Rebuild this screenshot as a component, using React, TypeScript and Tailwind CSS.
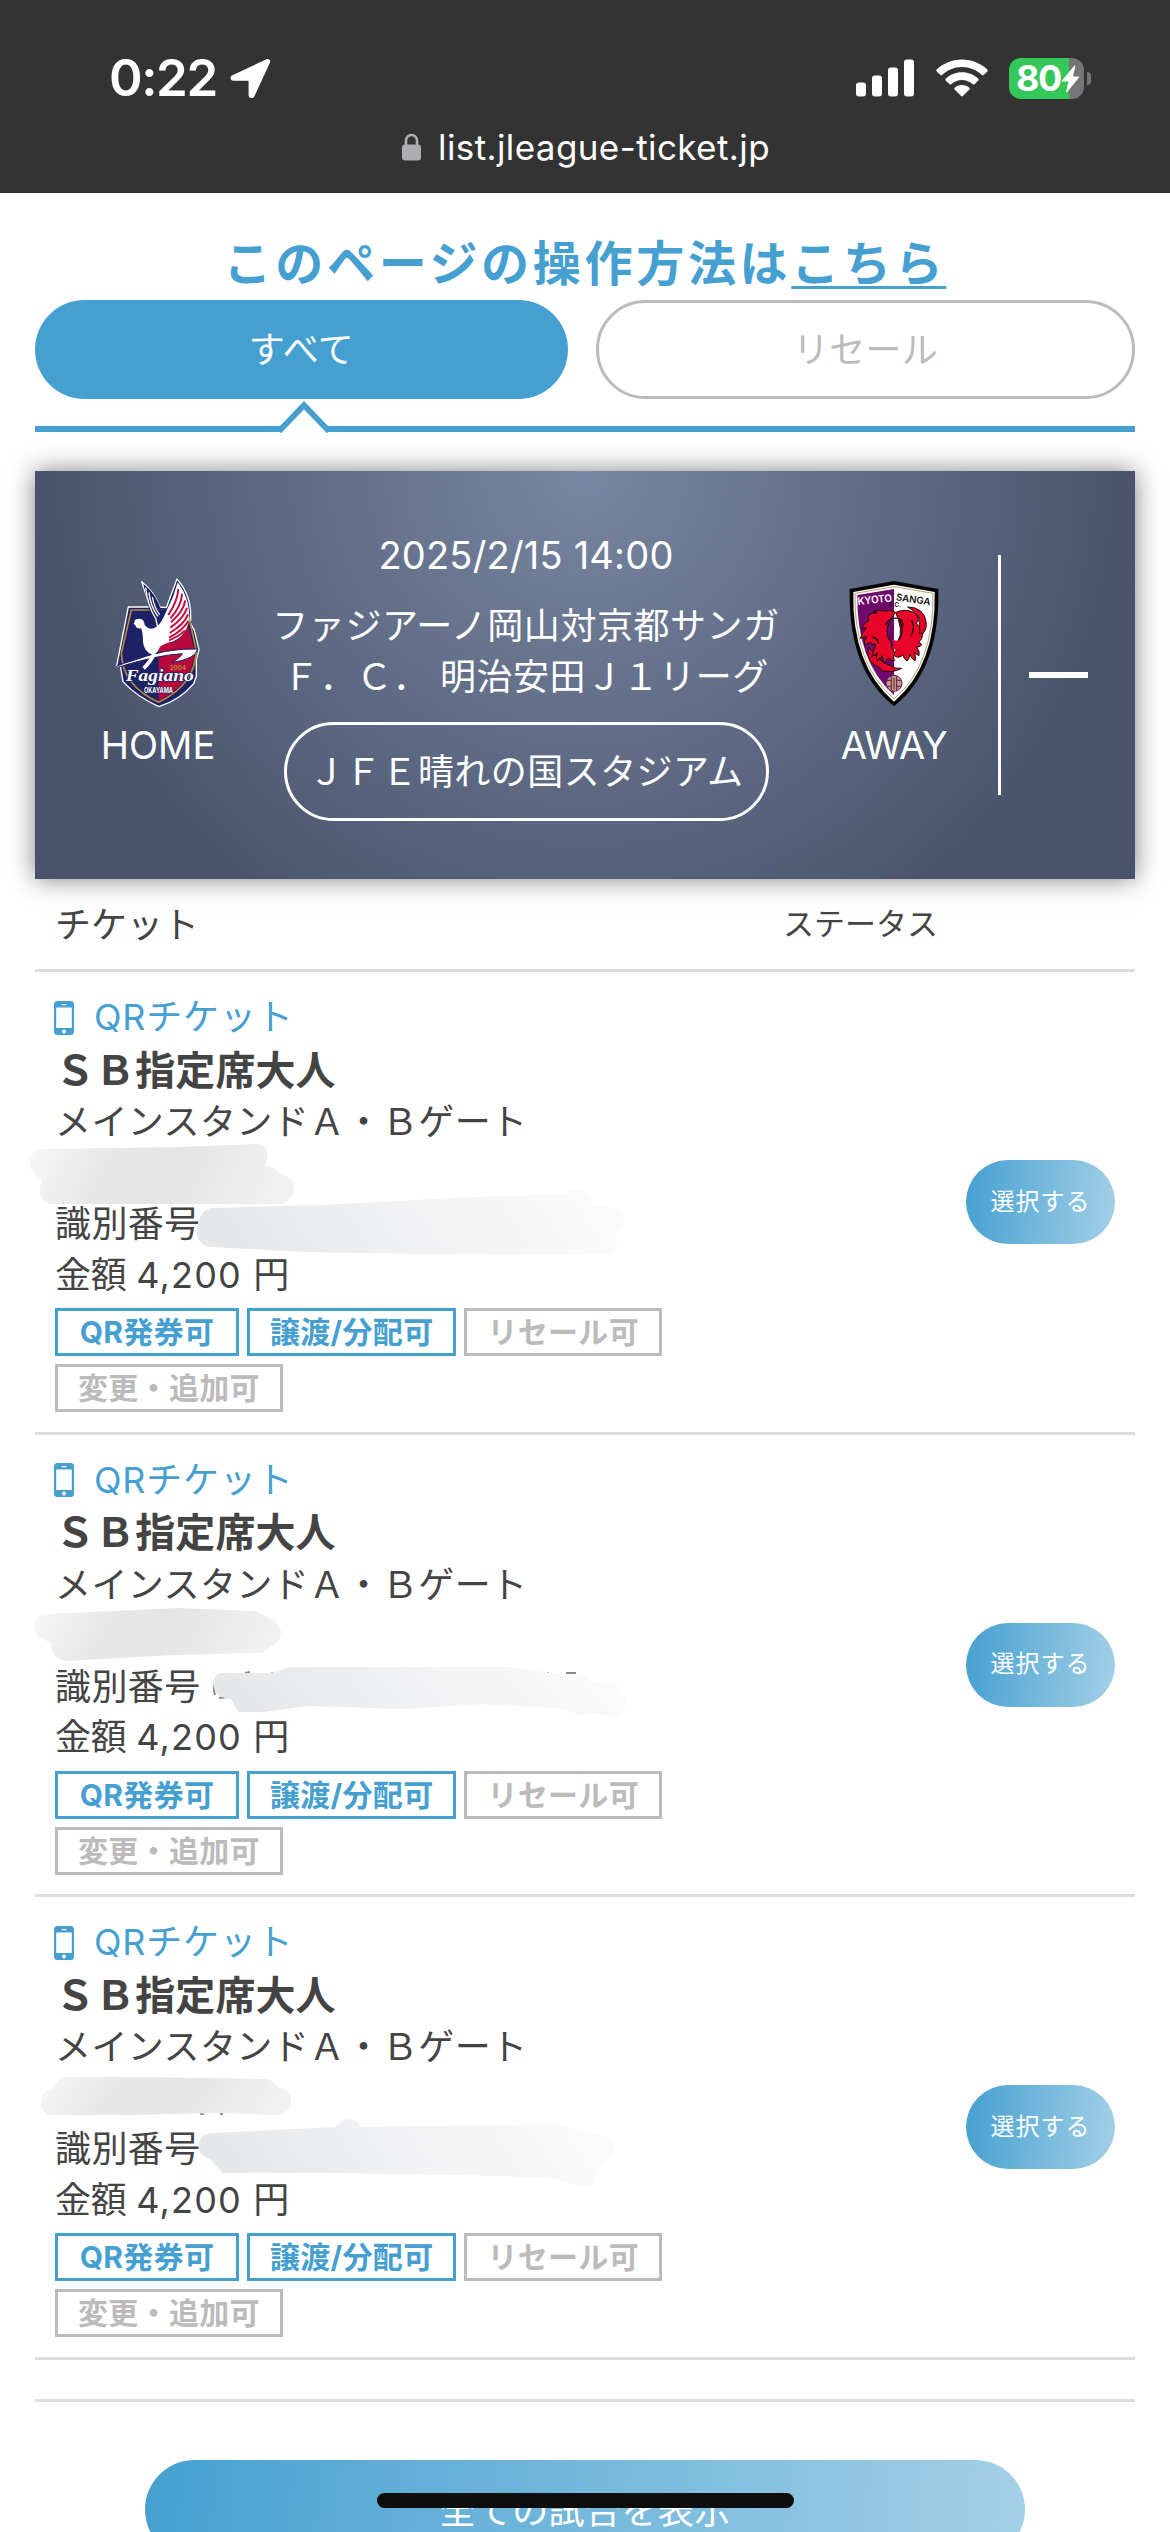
import { clsx } from 'clsx';

interface Label {
  text: string;
  active: boolean;
}

interface Mask {
  name: string;
  number: string;
  marks?: string;
}

interface Ticket {
  id: number;
  kind: string;
  seat: string;
  gate: string;
  price: string;
  labels: Label[];
  mask: Mask;
}

const LABELS: Label[] = [
  { text: 'QR発券可', active: true },
  { text: '譲渡/分配可', active: true },
  { text: 'リセール可', active: false },
  { text: '変更・追加可', active: false },
];

const BASE = {
  kind: 'QRチケット',
  seat: 'ＳＢ指定席大人',
  gate: 'メインスタンドＡ・Ｂゲート',
  price: '4,200',
  labels: LABELS,
};

// Hidden personal details are covered by hand-drawn strokes
const TICKETS: Ticket[] = [
  {
    ...BASE,
    id: 1,
    mask: {
      name: 'M33 190Q34 180 42 180L178 178L257 175Q266 177 264 187L261 196Q276 198 278 205Q291 207 291 217Q290 226 281 229L50 229Q41 225 43 216L45 206Q32 200 33 190Z',
      number: 'M200 258Q201 242 211 239L321 236L473 228L567 225Q578 213 588 228L590 238Q620 235 621 247Q620 255 613 260L614 272Q612 279 603 279L424 279L308 277L210 272Q199 269 200 258Z',
    },
  },
  {
    ...BASE,
    id: 2,
    mask: {
      name: 'M38 192Q38 182 46 182Q110 179 179 176L254 179L272 188Q281 195 276 204L261 215L174 217L67 223Q52 222 54 204Q38 203 38 192Z',
      number: 'M216 248Q217 240 224 241L272 241L290 235L509 235L551 241L580 243L594 250Q621 248 622 264Q624 280 612 279L598 275L580 277L565 271L482 266L402 271L308 268L263 274L240 274L233 261Q217 261 216 248Z',
      marks: 'M215 260Q211 246 220 239M219 263L228 262M245 238L250 237M269 240L273 238M566 238L576 238M547 238L549 238',
    },
  },
  {
    ...BASE,
    id: 3,
    mask: {
      name: 'M44 205Q45 194 56 194Q58 184 67 183L134 183L268 185L277 193Q289 195 288 206Q286 215 273 215L220 213L130 215L50 215Q43 212 44 205Z',
      number: 'M202 250Q201 240 212 239L337 233Q350 217 360 233L554 230L589 239Q613 242 612 249Q609 261 594 269L592 282Q589 288 581 286L554 278L504 276L335 273L224 273L213 260Q202 257 202 250Z',
      marks: 'M200 217L204 217M220 217L223 217M119 217L122 217',
    },
  },
];

function StatusBar() {
  return (
    <header className="h-[193px] bg-[#333333] pt-12 text-white">
      <div className="flex h-[60px] items-center justify-between pr-[79px] pl-[109px]">
        <div className="flex items-center gap-[13px]">
          <span className="text-[51px] leading-[60px] font-semibold tracking-[-1.4px]">0:22</span>
          <svg width="41" height="40" viewBox="0 0 41 40" fill="currentColor">
            <path d="M36.5 1.2 2.4 17.2c-3 1.5-2.2 5.6 1.1 5.6h14.3c.5 0 .8.3.8.8V37c0 3.500 4.400 4.300 5.800 1.200L40 4.500c1-2.300-1.200-4.300-3.500-3.300Z" />
          </svg>
        </div>
        <div className="flex items-center">
          <svg width="58" height="38" viewBox="0 0 58 38" fill="currentColor">
            <rect x="0" y="23.500" width="10" height="14" rx="3" />
            <rect x="16" y="16.500" width="10" height="21" rx="3" />
            <rect x="32" y="8.500" width="10" height="29" rx="3" />
            <rect x="48" y="0.500" width="10" height="37" rx="3" />
          </svg>
          <svg className="ml-[22px]" width="52" height="38" viewBox="0 0 52 38" fill="currentColor">
            <path d="M26 0.500C35.800 0.500 44.800 4.300 51.300 10.600c.5.5.5 1.300 0 1.800l-3.700 3.700c-.5.5-1.200.5-1.700 0C40.700 11 33.700 8 26 8S11.300 11 6.100 16.100c-.5.5-1.200.5-1.700 0L.700 12.400c-.5-.5-.5-1.300 0-1.800C7.200 4.300 16.200.500 26 .500Z" />
            <path d="M26 13.300c6.300 0 12 2.400 16.300 6.400.5.5.5 1.300 0 1.800l-3.800 3.700c-.5.5-1.200.5-1.700 0C34 22.500 30.200 20.900 26 20.900s-8 1.600-10.800 4.300c-.5.5-1.200.5-1.700 0l-3.800-3.700c-.5-.5-.5-1.300 0-1.800 4.300-4 10-6.400 16.300-6.400Z" />
            <path d="M26 26c2.800 0 5.400 1 7.300 2.700.6.5.6 1.300.1 1.800l-6.500 6.500c-.5.5-1.300.5-1.800 0l-6.500-6.500c-.5-.5-.5-1.300.1-1.800C20.600 27 23.200 26 26 26Z" />
          </svg>
          <div className="relative ml-[21px] flex h-[41px] w-[75px] items-center rounded-[12px] bg-[linear-gradient(90deg,#34c759_0_60px,#757577_60px)] pl-[7px]">
            <span className="text-[36px] leading-[41px] font-bold tracking-[-1.500px]">80</span>
            <svg className="absolute top-[7px] left-[52px]" width="19" height="28" viewBox="0 0 19 28" fill="currentColor">
              <path d="M13 1 1 15.500c-.4.6-.2 1 .5 1h6L5 26.500c-.2 1 .7 1.200 1.300.5L18 12.500c.5-.6.2-1.100-.5-1.100h-5.500L14.300 1.500C14.500.500 13.600.200 13 1Z" />
            </svg>
          </div>
          <div className="ml-[3px] h-[13px] w-1 rounded-r-full bg-[#757577]" />
        </div>
      </div>
      <div className="mt-4 flex h-[46px] items-center justify-center gap-[17px] pl-0.5">
        <svg width="19" height="28" viewBox="0 0 19 28">
          <path d="M4 13V7.500a5.500 5.500 0 0 1 11 0V13" fill="none" stroke="#aeaeb2" strokeWidth="2.600" />
          <rect x="0" y="11.500" width="19" height="16" rx="3" fill="#aeaeb2" />
        </svg>
        <span className="text-[35px] leading-[46px] tracking-[0.4px]">list.jleague-ticket.jp</span>
      </div>
    </header>
  );
}

function Tabs() {
  return (
    <nav>
      <div className="flex gap-7 text-4xl">
        <button className="h-[99px] flex-1 rounded-full bg-[#45a0d1] pt-px tracking-[0.5px] text-white">すべて</button>
        <button className="h-[99px] flex-1 rounded-full border-3 border-[#bbbbbb] tracking-[0.3px] text-[#bbbbbb]">リセール</button>
      </div>
      <div className="relative mt-[27px] h-1.5 bg-[#45a0d1]">
        <svg className="absolute -top-[26px] left-[241px]" width="56" height="33" viewBox="0 0 56 33">
          <path d="M3 32 28 5l25 27Z" fill="#ffffff" />
          <path d="M3 31.200 28 5.200l25 26" fill="none" stroke="#45a0d1" strokeWidth="5.800" />
        </svg>
      </div>
    </nav>
  );
}

function HomeCrest() {
  return (
    <svg width="86" height="130" viewBox="74 55 258 390">
      <path
        d="M114 142H180L154 66Q194 98 208 142L228 144L260 58Q308 112 300 190L312 212L326 270L318 300V350L310 372Q270 420 206 441Q140 412 98 366L94 342L90 318L78 324Z"
        fill="#1d2266"
        stroke="#ffffff"
        strokeWidth="4"
        strokeLinejoin="round"
      />
      <path d="M123 151H291L318 272Q315 375 205 428Q96 378 93 280Z" fill="#1d2266" stroke="#b58a3c" strokeWidth="5" />
      <path d="M205 190 292 192 313 272Q310 371 205 423Z" fill="#b8083c" />
      <path d="M160 74Q195 100 212 150L238 146L260 64Q303 112 295 190Q285 232 245 250L190 215Z" fill="#1d2266" />
      <path
        d="M166 84Q172 140 196 176L203 206M176 98Q180 140 203 170M186 112Q192 145 208 165"
        fill="none"
        stroke="#ffffff"
        strokeWidth="4"
      />
      <path
        d="M133 186Q131 178 144 178Q160 174 163 196Q174 210 190 206Q208 200 220 172L248 112L262 68Q300 118 296 180Q290 226 246 246Q226 248 208 262Q205 278 188 286Q160 276 158 246Q158 218 152 206Q138 208 136 198L130 192Z"
        fill="#ffffff"
      />
      <path
        d="M264 88Q262 124 234 166M275 102Q274 138 240 176M285 122Q280 154 242 188M290 144Q282 174 240 204M293 164Q282 194 238 220M294 184Q278 212 236 234M284 212Q266 230 236 242"
        fill="none"
        stroke="#c40d3f"
        strokeWidth="6"
      />
      <path
        d="M78 320Q100 310 124 304Q230 264 322 268Q316 298 246 308Q274 290 276 282Q200 286 78 324Z"
        fill="#ffffff"
        stroke="#1d2266"
        strokeWidth="3"
      />
      <path d="M192 280Q184 302 160 326" fill="none" stroke="#ffffff" strokeWidth="11" />
      <text x="239" y="332" fill="#b58a3c" fontSize="19" fontWeight="700" textLength="48" lengthAdjust="spacingAndGlyphs">
        2004
      </text>
      <text
        x="106"
        y="364"
        fill="#ffffff"
        stroke="#1d2266"
        strokeWidth="5"
        paintOrder="stroke"
        fontFamily="Liberation Serif, serif"
        fontSize="50"
        fontStyle="italic"
        fontWeight="700"
        textLength="204"
        lengthAdjust="spacingAndGlyphs"
      >
        Fagiano
      </text>
      <text
        x="161"
        y="401"
        fill="#ffffff"
        stroke="#1d2266"
        strokeWidth="3"
        paintOrder="stroke"
        fontSize="22"
        fontWeight="700"
        textLength="87"
        lengthAdjust="spacingAndGlyphs"
      >
        OKAYAMA
      </text>
    </svg>
  );
}

function AwayCrest() {
  return (
    <svg width="90" height="130" viewBox="60 55 270 390">
      <path d="M195 64 328 88Q334 330 195 440Q56 330 62 88Z" fill="#050505" />
      <path d="M195 75 317 97Q322 318 195 426Q68 318 73 97Z" fill="#ffffff" />
      <path d="M195 81 312 101Q316 314 195 418Q74 314 78 101Z" fill="#ffffff" stroke="#b7a469" strokeWidth="3" />
      <path d="M195 88V406Q82 306 85 106Z" fill="#6f0a6d" />
      <text x="87" y="136" fill="#ffffff" fontSize="31" fontWeight="600" textLength="103" lengthAdjust="spacingAndGlyphs" transform="rotate(-6 87 136)">
        KYOTO
      </text>
      <text x="200" y="122" fill="#111111" fontSize="29" fontWeight="600" textLength="104" lengthAdjust="spacingAndGlyphs" transform="rotate(8 200 122)">
        SANGA
      </text>
      <text x="180" y="141" fill="#111111" fontSize="20" fontWeight="600" textLength="36">
        F.C.
      </text>
      <g fill="#e9052a" stroke="#141008" strokeWidth="3" strokeLinejoin="round">
        {/* Tail feathers */}
        <path d="M236 142Q286 142 292 190Q293 216 272 232L264 214Q276 196 270 176Q264 158 236 142Z" />
        <path d="M120 262Q108 300 140 318Q158 324 158 334L184 336Q204 334 218 326Q196 328 186 318Q150 310 120 262Z" />
        {/* Left wing */}
        <path d="M200 158Q184 148 168 154Q150 148 134 156L144 160Q124 158 116 172L120 182Q104 188 98 206L112 204Q98 220 94 236L114 230Q104 244 106 256L124 248Q130 256 140 254Q132 276 128 292L144 280Q140 294 146 304L160 288Q162 302 166 312L178 294Q182 304 196 304Q190 290 198 280Q184 264 186 248Q172 232 174 212Q176 186 200 158Z" />
        {/* Right wing */}
        <path d="M200 158Q228 146 254 158Q270 168 268 184L262 190Q278 204 270 222L280 220Q282 238 270 246L278 256Q270 264 262 262Q274 274 270 288Q262 286 256 276Q262 292 258 304Q248 298 242 284Q242 298 234 304Q224 298 222 286Q208 298 196 288Q194 274 204 270Q194 262 204 250Q218 228 214 206Q210 180 200 158Z" />
      </g>
      <path
        d="M170 196Q180 172 208 176Q222 180 222 200M212 184Q228 212 210 240M130 232Q148 236 148 252M248 182Q260 206 246 230"
        fill="none"
        stroke="#141008"
        strokeWidth="4"
      />
      <path d="M197 190 210 206 205 226 197 240Z" fill="#ffffff" />
      <path d="M188 240Q200 254 190 268L204 272 208 244Z" fill="#e9052a" />
      <circle cx="195" cy="371" r="24" fill="#b7a469" stroke="#6f0a6d" strokeWidth="3" />
      <path d="M187 350V392M203 350V392M195 354V388M174 362H187M203 362H216M174 380H187M203 380H216" stroke="#6f0a6d" strokeWidth="3" />
    </svg>
  );
}

function MatchCard() {
  return (
    <section className="mt-[39px] flex h-[408px] bg-[radial-gradient(circle_560px_at_50%_0%,#7986a1,#48536b)] text-white shadow-[0_0_24px_rgba(0,0,0,0.5)]">
      <div className="flex w-[246px] flex-col items-center pt-[107px]">
        <HomeCrest />
        <p className="mt-[12px] text-[38px] leading-[50px]">HOME</p>
      </div>
      <div className="flex w-[490px] flex-col items-center pt-[59px]">
        <p className="text-[38px] leading-[50px] tracking-[0.200px]">2025/2/15 14:00</p>
        <h2 className="mt-[21px] text-center text-4xl leading-[51px] tracking-[0.550px] whitespace-nowrap">
          ファジアーノ岡山対京都サンガ
          <br />
          Ｆ．Ｃ． 明治安田Ｊ１リーグ
        </h2>
        <div className="mt-[19px] flex h-[99px] w-[485px] items-center justify-center rounded-full border-3 border-white text-4xl tracking-[0.450px]">
          ＪＦＥ晴れの国スタジアム
        </div>
      </div>
      <div className="flex w-[227px] flex-col items-center pt-[107px] pl-[19px]">
        <AwayCrest />
        <p className="mt-[12px] text-[38px] leading-[50px] tracking-[-0.500px]">AWAY</p>
      </div>
      <div className="h-60 w-[3px] self-center bg-white" />
      <div className="flex flex-1 items-center justify-center pr-[19px]">
        <div className="h-1.5 w-[59px] bg-white" />
      </div>
    </section>
  );
}

function PhoneIcon() {
  return (
    <svg width="20" height="34" viewBox="0 0 20 34">
      <rect width="20" height="34" rx="3.500" fill="#45a0d1" />
      <rect x="2.200" y="6.500" width="15.600" height="20.500" fill="#ffffff" />
      <rect x="7.500" y="3" width="5" height="1.200" rx="0.600" fill="#ffffff" />
      <circle cx="10" cy="30.500" r="1.900" fill="#ffffff" />
    </svg>
  );
}

function TicketMask({ id, mask }: { id: number; mask: Mask }) {
  return (
    <svg className="absolute top-0 -left-[35px]" width="700" height="460" viewBox="0 0 700 460">
      <defs>
        <linearGradient id={`name-${id}`} x1="0" x2="1" y1="0" y2="0.1">
          <stop offset="0" stopColor="#f7f7f7" />
          <stop offset="0.3" stopColor="#e8e8e8" />
          <stop offset="0.6" stopColor="#e5e5e5" />
          <stop offset="1" stopColor="#f1f1f1" />
        </linearGradient>
        <linearGradient id={`number-${id}`} x1="0" x2="1" y1="0.1" y2="0">
          <stop offset="0" stopColor="#e6e7e9" />
          <stop offset="0.4" stopColor="#f0f1f3" />
          <stop offset="0.7" stopColor="#f6f6f6" />
          <stop offset="1" stopColor="#fcfcfc" />
        </linearGradient>
      </defs>
      {mask.marks && <path d={mask.marks} fill="none" stroke="#8a8a8a" strokeWidth="2" />}
      <path d={mask.name} fill={`url(#name-${id})`} stroke={`url(#name-${id})`} strokeWidth="6" strokeLinejoin="round" />
      <path d={mask.number} fill={`url(#number-${id})`} stroke={`url(#number-${id})`} strokeWidth="6" strokeLinejoin="round" />
    </svg>
  );
}

function TicketRow({ ticket }: { ticket: Ticket }) {
  return (
    <li className="relative flex h-[462.67px] items-start justify-between border-b-3 border-[#dddddd] pr-5 pl-5">
      <div className="w-[630px] pt-5 text-4xl leading-[51.5px] tracking-[0.4px]">
        <p className="-ml-px flex items-center gap-5 text-[#45a0d1]">
          <PhoneIcon />
          <span className="tracking-[0.800px]">{ticket.kind}</span>
        </p>
        <p className="h-[51.5px] pt-px text-[40px] font-bold tracking-[0.1px]">{ticket.seat}</p>
        <p className="h-[51.5px] pt-0.5">{ticket.gate}</p>
        <p className="h-[51.5px]" />
        <p className="h-[51.5px] pt-px">識別番号</p>
        <p>
          <span className="tracking-[-0.3px]">金額 </span>
          <span className="tracking-[1.2px]">{ticket.price} </span>円
        </p>
        <div className="mt-[7px] flex flex-wrap gap-2">
          {ticket.labels.map((label) => (
            <span
              key={label.text}
              className={clsx(
                'flex h-12 min-w-[184px] items-center justify-center border-3 px-5 text-[30px] leading-[42px] font-bold tracking-[0.3px]',
                label.active ? 'border-[#45a0d1] text-[#45a0d1]' : 'border-[#bbbbbb] text-[#bbbbbb]'
              )}
            >
              {label.text}
            </span>
          ))}
        </div>
      </div>
      <TicketMask id={ticket.id} mask={ticket.mask} />
      <button className="mt-[188px] h-[84px] w-[149px] rounded-full bg-[linear-gradient(95deg,#45a0d1,#a4d0e7)] pb-px text-2xl tracking-[1px] text-white">
        選択する
      </button>
    </li>
  );
}

export default function App() {
  return (
    <div className="relative h-[2532px] w-[1170px] overflow-hidden bg-white font-['Inter','Noto_Sans_CJK_JP',sans-serif] text-[#444444]">
      <StatusBar />
      <main className="px-[35px]">
        <h1 className="h-[107px] pt-[35px] text-center text-5xl leading-[72px] font-bold tracking-[3.7px] text-[#45a0d1]">
          このページの操作方法は
          <a className="underline decoration-3 underline-offset-[5px]">こちら</a>
        </h1>
        <Tabs />
        <MatchCard />
        <div className="flex h-[93px] items-center border-b-3 border-[#dddddd] pt-px pl-5">
          <span className="w-[728px] text-4xl">チケット</span>
          <span className="text-[31px]">ステータス</span>
        </div>
        <ul>
          {TICKETS.map((ticket) => (
            <TicketRow key={ticket.id} ticket={ticket} />
          ))}
        </ul>
        <div className="mt-[39px] h-[3px] bg-[#dddddd]" />
        <button className="mx-auto mt-[58px] block h-[99px] w-[880px] rounded-full bg-[linear-gradient(95deg,#45a0d1,#a4d0e7)] pt-1 text-4xl tracking-[0.400px] text-white">
          全ての試合を表示
        </button>
      </main>
      {/* Home indicator */}
      <div className="absolute bottom-6 left-[377px] h-[15px] w-[417px] rounded-full bg-[#0e0e0e]" />
    </div>
  );
}
